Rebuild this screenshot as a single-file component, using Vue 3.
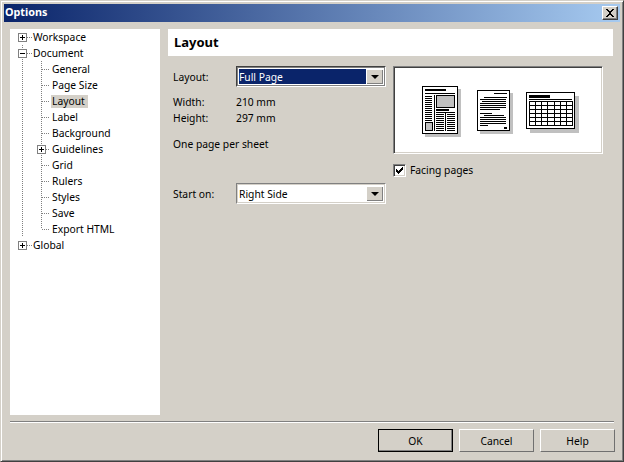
<script setup>
const tree = [
  { label: 'Workspace', level: 0, box: '+' },
  { label: 'Document', level: 0, box: '-', railBelow: true },
  { label: 'General', level: 1 },
  { label: 'Page Size', level: 1 },
  { label: 'Layout', level: 1, selected: true },
  { label: 'Label', level: 1 },
  { label: 'Background', level: 1 },
  { label: 'Guidelines', level: 1, box: '+' },
  { label: 'Grid', level: 1 },
  { label: 'Rulers', level: 1 },
  { label: 'Styles', level: 1 },
  { label: 'Save', level: 1 },
  { label: 'Export HTML', level: 1, last: true },
  { label: 'Global', level: 0, box: '+' },
]

const range = (start, end, step) => {
  const out = []
  for (let v = start; v <= end; v += step) out.push(v)
  return out
}

const p1Left = range(96, 120, 2)
const p1Lower = range(112, 129, 2)
const p2Lines = [
  [494, 507, 93], [484, 507, 97], [480, 506, 99], [482, 506, 101], [480, 506, 103], [480, 506, 105],
  [480, 506, 107], [480, 500, 109], [480, 492, 113], [484, 504, 115], [480, 506, 117], [480, 506, 119],
  [480, 506, 121], [480, 506, 123], [480, 488, 125],
]
const gridX = range(529, 572, 6.14).map(Math.round)
const gridY = range(101, 125, 4)
</script>

<template>
  <div class="window">
    <div class="titlebar">
      <span class="title">Options</span>
      <span class="close">
        <svg width="10" height="8" viewBox="0 0 10 8" shape-rendering="crispEdges">
          <path d="M1 0h2v1h1v1h2V1h1V0h2v1H8v1H7v1H6v2h1v1h1v1h1v1H7V7H6V6H4v1H3v1H1V7h1V6h1V5h1V3H3V2H2V1H1z" fill="#000" />
        </svg>
      </span>
    </div>

    <div class="content">
      <div class="tree">
        <div v-for="row in tree" :key="row.label" class="row">
          <span class="cell0" :class="{ railed: row.level === 1, 'rail-below': row.railBelow, stub: row.level === 0 }">
            <span v-if="row.level === 0" class="box">
              <i class="h"></i><i v-if="row.box === '+'" class="v"></i>
            </span>
          </span>
          <span v-if="row.level === 1" class="cell1" :class="{ last: row.last }">
            <span v-if="row.box" class="box">
              <i class="h"></i><i class="v"></i>
            </span>
          </span>
          <span class="label" :class="{ selected: row.selected }">{{ row.label }}</span>
        </div>
      </div>

      <div class="main">
        <div class="heading">Layout</div>
        <div class="panes">
          <div class="form">
            <div class="field">
              <span class="caption">Layout:</span>
              <div class="combo">
                <span class="combo-value active">Full Page</span>
                <span class="combo-btn"><i class="arrow"></i></span>
              </div>
            </div>
            <div class="info first">
              <span class="caption">Width:</span><span>210 mm</span>
            </div>
            <div class="info">
              <span class="caption">Height:</span><span>297 mm</span>
            </div>
            <div class="info sheet">One page per sheet</div>
            <div class="field start">
              <span class="caption">Start on:</span>
              <div class="combo plain">
                <span class="combo-value">Right Side</span>
                <span class="combo-btn"><i class="arrow"></i></span>
              </div>
            </div>
          </div>

          <div class="side">
            <div class="preview">
              <svg width="206" height="84" viewBox="395 68 206 84" shape-rendering="crispEdges">
                <!-- newspaper page -->
                <rect x="425" y="89" width="36" height="48" fill="#c0c0c0" />
                <rect x="422.5" y="86.5" width="35" height="47" fill="#fff" stroke="#000" />
                <rect x="425" y="89" width="21" height="2" fill="#000" />
                <rect x="425" y="93" width="30" height="1" fill="#000" />
                <rect v-for="y in p1Left" :key="'a' + y" x="425" :y="y" width="7" height="1" fill="#000" />
                <rect x="425.5" y="122.5" width="7" height="8" fill="#c0c0c0" stroke="#000" />
                <rect x="434" y="95" width="1" height="36" fill="#000" />
                <rect x="436.5" y="95.5" width="18" height="12" fill="#c0c0c0" stroke="#000" />
                <rect x="436" y="109" width="13" height="2" fill="#000" />
                <rect x="436" y="112" width="19" height="1" fill="#000" />
                <rect x="445" y="113" width="1" height="18" fill="#000" />
                <rect v-for="y in p1Lower" :key="'b' + y" x="436" :y="y + 2" width="8" height="1" fill="#000" />
                <rect v-for="y in p1Lower" :key="'c' + y" x="447" :y="y + 2" width="8" height="1" fill="#000" />

                <!-- text page -->
                <rect x="480" y="93" width="33" height="41" fill="#c0c0c0" />
                <rect x="477.5" y="90.5" width="32" height="40" fill="#fff" stroke="#000" />
                <rect v-for="l in p2Lines" :key="'d' + l[2]" :x="l[0]" :y="l[2]" :width="l[1] - l[0]" height="1" fill="#000" />
                <rect x="504" y="127" width="3" height="2" fill="#000" />

                <!-- table page -->
                <rect x="530" y="96" width="49" height="37" fill="#c0c0c0" />
                <rect x="526.5" y="92.5" width="48" height="36" fill="#fff" stroke="#000" />
                <rect x="529" y="95" width="21" height="3" fill="#000" />
                <rect x="529" y="99" width="43" height="1" fill="#000" />
                <rect v-for="y in gridY" :key="'e' + y" x="529" :y="y" width="43" height="1" fill="#000" />
                <rect v-for="x in gridX" :key="'f' + x" :x="x" y="101" width="1" height="25" fill="#000" />
              </svg>
            </div>
            <label class="check">
              <span class="checkbox">
                <svg width="8" height="8" viewBox="0 0 8 8" shape-rendering="crispEdges">
                  <path d="M7 0v3H6v1H5v1H4v1H3v1H2V6H1V5H0V2h1v1h1v1h1V3h1V2h1V1h1V0z" fill="#000" />
                </svg>
              </span>
              <span>Facing pages</span>
            </label>
          </div>
        </div>
      </div>
    </div>

    <div class="separator"></div>

    <div class="footer">
      <button class="btn default">OK</button>
      <button class="btn">Cancel</button>
      <button class="btn">Help</button>
    </div>
  </div>
</template>

<style>
html, body { margin: 0; background: #d4d0c8; }
</style>

<style scoped>
.window {
  width: 624px;
  height: 462px;
  box-sizing: border-box;
  background: #d4d0c8;
  border: 1px solid;
  border-color: #d4d0c8 #404040 #404040 #d4d0c8;
  box-shadow: inset 1px 1px 0 #fff, inset -1px -1px 0 #808080;
  padding: 3px 3px 0 3px;
  font-family: "Noto Sans", "Liberation Sans", sans-serif;
  font-size: 10.3px;
  color: #000;
  overflow: hidden;
}
.titlebar {
  height: 18px;
  display: flex;
  align-items: center;
  justify-content: space-between;
  padding: 0 2px 0 1px;
  background: linear-gradient(90deg, #0a246a, #a6caf0);
}
.title {
  color: #fff;
  font-size: 10.8px;
  line-height: 16px;
  margin-bottom: 2px;
  font-weight: bold;
}
.close {
  width: 16px;
  height: 14px;
  box-sizing: border-box;
  background: #d4d0c8;
  border: 1px solid;
  border-color: #fff #404040 #404040 #fff;
  box-shadow: inset -1px -1px 0 #808080;
  display: flex;
  align-items: center;
  justify-content: center;
}
.close svg { display: block; }
.content {
  display: flex;
  gap: 8px;
  padding: 7px 0 0 6px;
}
.tree {
  width: 150px;
  height: 386px;
  background: #fff;
}
.row {
  display: flex;
  height: 16px;
}
.cell0 {
  position: relative;
  width: 22px;
  height: 16px;
  flex: none;
}
.railed {
  background-image: linear-gradient(#808080 50%, transparent 50%);
  background-size: 1px 2px;
  background-repeat: repeat-y;
  background-position: 12px 0;
}
.rail-below {
  background-image: linear-gradient(#808080 50%, transparent 50%);
  background-size: 1px 2px;
  background-repeat: repeat-y;
  background-position: 12px 0;
}
.stub::after {
  content: "";
  position: absolute;
  left: 17px;
  top: 8px;
  width: 5px;
  height: 1px;
  background-image: linear-gradient(90deg, #808080 50%, transparent 50%);
  background-size: 2px 1px;
}
.cell1 {
  position: relative;
  width: 19px;
  flex: none;
  background-image: linear-gradient(#808080 50%, transparent 50%);
  background-size: 1px 2px;
  background-repeat: repeat-y;
  background-position: 9px 0;
}
.cell1.last { height: 8px; }
.cell1::after {
  content: "";
  position: absolute;
  left: 10px;
  top: 8px;
  width: 8px;
  height: 1px;
  background-image: linear-gradient(90deg, #808080 50%, transparent 50%);
  background-size: 2px 1px;
}
.box {
  position: absolute;
  left: 8px;
  top: 4px;
  width: 9px;
  height: 9px;
  box-sizing: border-box;
  border: 1px solid #808080;
  background: #fff;
  z-index: 1;
}
.cell1 .box { left: 5px; }
.box .h {
  position: absolute;
  left: 1px;
  top: 3px;
  width: 5px;
  height: 1px;
  background: #000;
}
.box .v {
  position: absolute;
  left: 3px;
  top: 1px;
  width: 1px;
  height: 5px;
  background: #000;
}
.label {
  height: 13px;
  line-height: 12px;
  margin-top: 2px;
  padding: 0 3px 0 1px;
  white-space: nowrap;
}
.label.selected { background: #d4d0c8; }
.main { width: 445px; }
.heading {
  height: 27px;
  line-height: 27px;
  background: #fff;
  font-size: 13px;
  font-weight: bold;
  padding-left: 6px;
}
.panes {
  display: flex;
  gap: 7px;
  padding: 10px 0 0 5px;
}
.form { width: 213px; }
.field {
  display: flex;
  align-items: center;
  height: 21px;
}
.caption {
  display: inline-block;
  width: 63px;
  flex: none;
}
.combo {
  width: 150px;
  height: 21px;
  box-sizing: border-box;
  display: flex;
  background: #fff;
  border: 1px solid;
  border-color: #404040 #fff #fff #404040;
  box-shadow: inset 1px 1px 0 #808080, inset -1px -1px 0 #808080;
  padding: 2px;
}
.combo.plain {
  border-color: #808080 #fff #fff #808080;
  box-shadow: inset 1px 1px 0 #d4d0c8, inset -1px -1px 0 #d4d0c8;
}
.combo-value {
  flex: 1;
  line-height: 17px;
}
.combo-value.active {
  background: #0a246a;
  color: #fff;
}
.combo-btn {
  width: 17px;
  flex: none;
  box-sizing: border-box;
  background: #d4d0c8;
  box-shadow: inset 1px 1px 0 #fff, inset -1px -1px 0 #808080;
  display: flex;
  align-items: center;
  justify-content: center;
}
.arrow {
  width: 0;
  height: 0;
  border-left: 4px solid transparent;
  border-right: 4px solid transparent;
  border-top: 4px solid #000;
}
.info {
  height: 16px;
  line-height: 16px;
  display: flex;
}
.info.first { margin-top: 7px; }
.sheet { margin-top: 10px; }
.start { margin-top: 31px; }
.side { width: 210px; }
.preview {
  height: 88px;
  box-sizing: border-box;
  background: #fff;
  border: 1px solid;
  border-color: #808080 #fff #fff #808080;
  box-shadow: inset 1px 1px 0 #404040, inset -1px -1px 0 #d4d0c8;
  padding: 1px;
}
.preview svg { display: block; }
.check {
  display: flex;
  align-items: center;
  gap: 4px;
  margin: 10px 0 0 0;
  height: 13px;
  line-height: 13px;
}
.checkbox {
  width: 13px;
  height: 13px;
  box-sizing: border-box;
  background: #fff;
  border: 1px solid;
  border-color: #808080 #fff #fff #808080;
  box-shadow: inset 1px 1px 0 #404040, inset -1px -1px 0 #d4d0c8;
  display: flex;
  align-items: center;
  justify-content: center;
}
.checkbox svg { display: block; }
.separator {
  height: 1px;
  width: 604px;
  margin: 6px 0 0 6px;
  background: #808080;
  border-bottom: 1px solid #fff;
}
.footer {
  display: flex;
  justify-content: flex-end;
  gap: 6px;
  padding: 6px 5px 0 0;
}
.btn {
  width: 75px;
  height: 23px;
  box-sizing: border-box;
  padding: 0;
  background: #d4d0c8;
  font: inherit;
  color: #000;
  border: 1px solid;
  border-color: #fff #707070 #707070 #fff;
}
.btn.default {
  border-color: #000;
  box-shadow: inset -1px -1px 0 #808080;
}
</style>
